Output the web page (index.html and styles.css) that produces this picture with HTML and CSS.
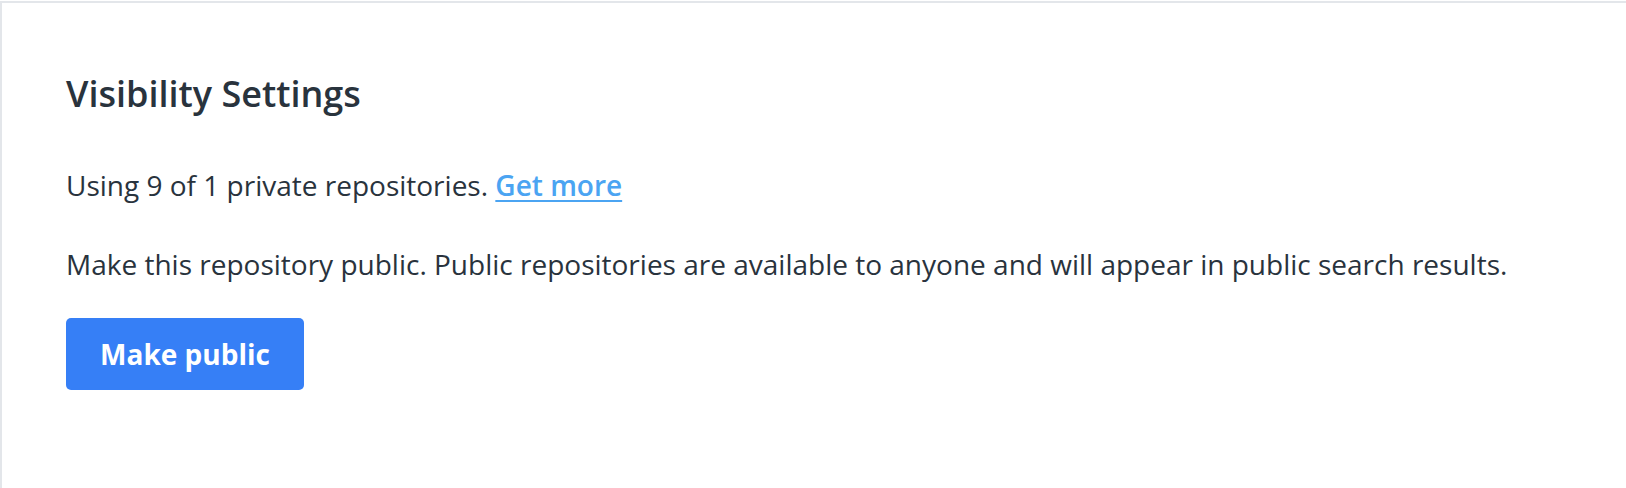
FILE: index.html
```html
<!DOCTYPE html>
<html lang="en">
<head>
<meta charset="utf-8">
<title>Visibility Settings</title>
<link rel="stylesheet" href="styles.css">
</head>
<body>
  <section class="card">
    <h2 class="card-title">Visibility Settings</h2>
    <p class="usage">Using 9 of 1 private repositories. <a class="link" href="#">Get more</a></p>
    <p class="desc">Make this repository public. Public repositories are available to anyone and will appear in public search results.</p>
    <button class="btn-primary" type="button">Make public</button>
  </section>
</body>
</html>
```
FILE: styles.css
```css
html, body {
  margin: 0;
  padding: 0;
  background: #ffffff;
}

body {
  padding-top: 1px;
  font-family: "Open Sans", "Noto Sans", sans-serif;
  color: #29333d;
  overflow: hidden;
}

.card {
  box-sizing: border-box;
  min-height: calc(100vh - 1px);
  border-top: 2px solid #e3e6ea;
  border-left: 2px solid #e3e6ea;
  background: #ffffff;
  padding: 67px 0 40px 64px;
}

.card-title {
  margin: 0;
  font-size: 36px;
  line-height: 48px;
  font-weight: 600;
  color: #29333d;
}

.usage {
  margin: 47px 0 0;
  font-size: 28px;
  line-height: 40px;
}

.desc {
  margin: 39px 0 0;
  font-size: 28px;
  line-height: 40px;
}

.link {
  color: #4ba4f2;
  font-weight: 600;
  text-decoration: underline;
  text-decoration-thickness: 2px;
  text-underline-offset: 4px;
}

.btn-primary {
  display: block;
  margin-top: 34px;
  width: 238px;
  height: 72px;
  border: 0;
  border-radius: 5px;
  background: #367ff6;
  color: #ffffff;
  font-family: "Open Sans", "Noto Sans", sans-serif;
  font-size: 28px;
  font-weight: 700;
  padding: 0;
}
```
